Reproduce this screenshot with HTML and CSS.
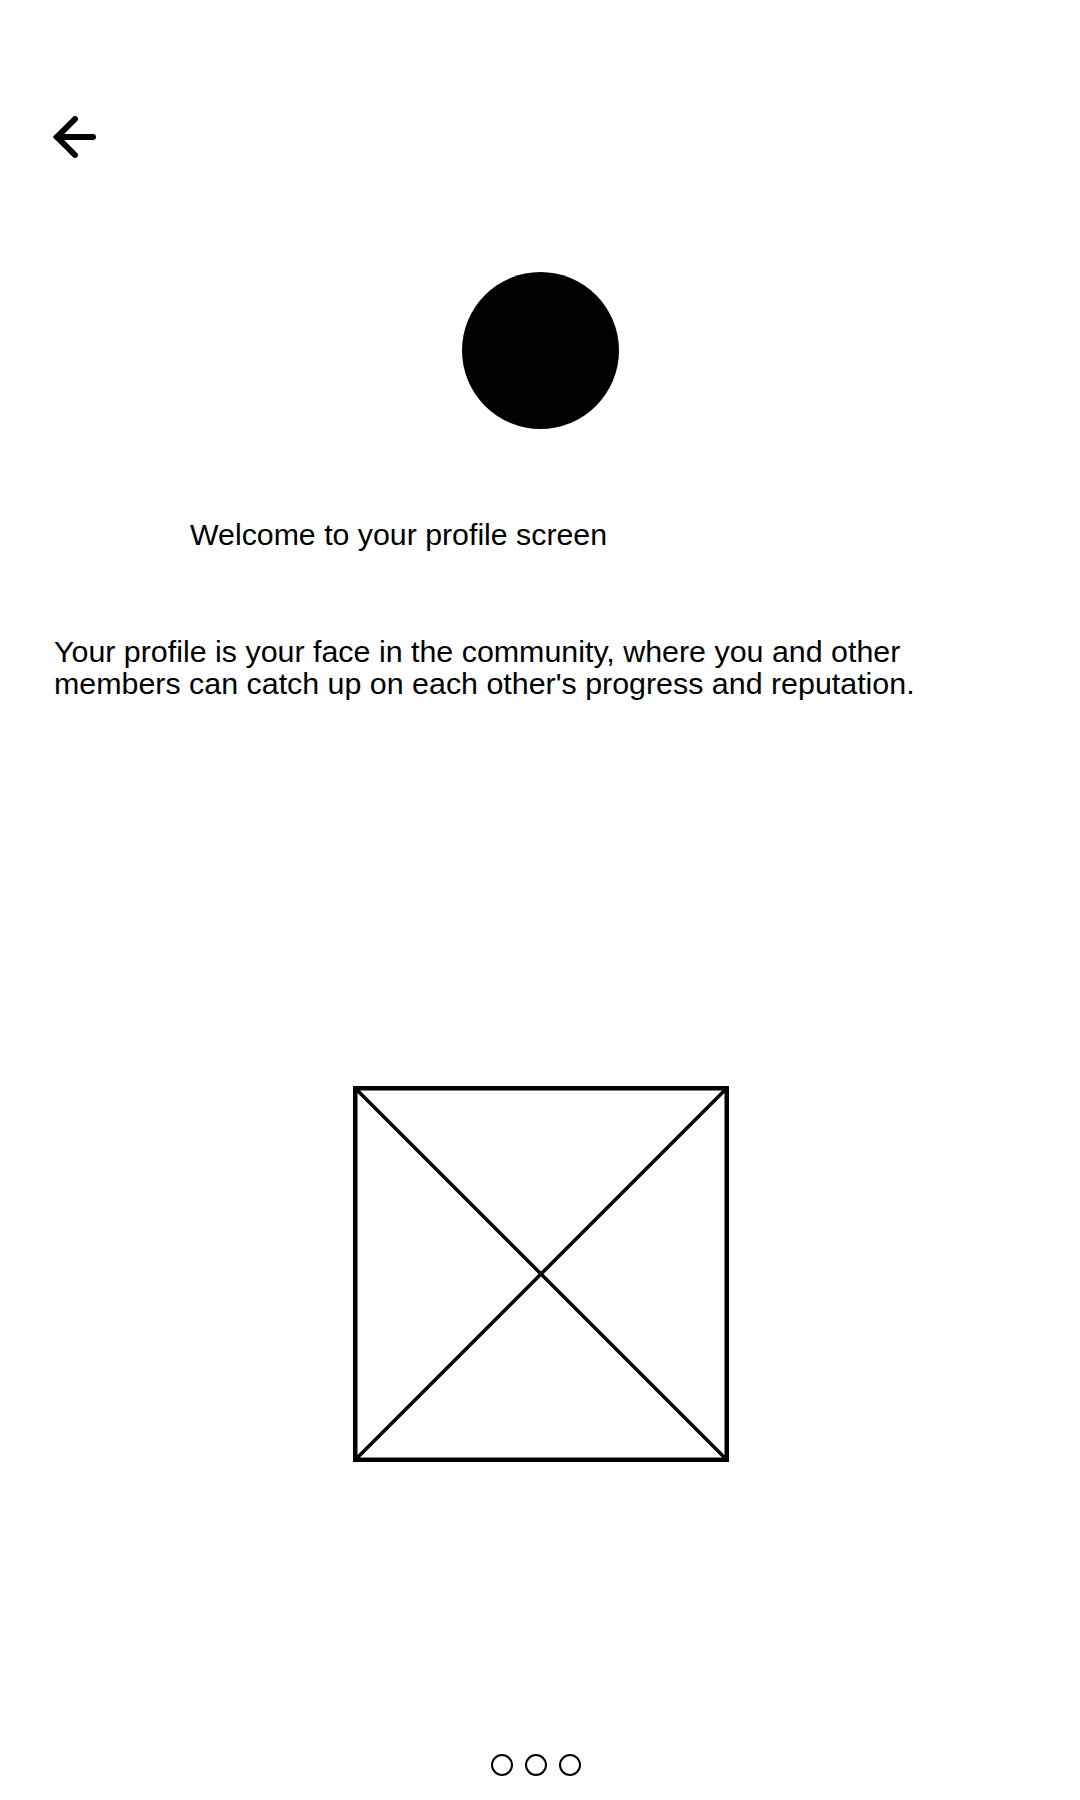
FILE: index.html
```html
<!DOCTYPE html>
<html lang="en">
<head>
<meta charset="utf-8">
<title>Profile</title>
<link rel="stylesheet" href="styles.css">
</head>
<body>
<div class="screen">
  <header class="topbar">
    <button class="back" aria-label="Back">
      <svg width="44" height="44" viewBox="0 0 44 44">
        <path d="M5 21 H41" fill="none" stroke="#000" stroke-width="6" stroke-linecap="round"/>
        <path d="M23 3 L5 21 L23 39" fill="none" stroke="#000" stroke-width="6" stroke-linecap="round" stroke-linejoin="miter"/>
      </svg>
    </button>
  </header>
  <div class="avatar"></div>
  <h1 class="welcome">Welcome to your profile screen</h1>
  <p class="intro">Your profile is your face in the community, where you and other members can catch up on each other's progress and reputation.</p>
  <div class="media">
    <svg class="placeholder" width="376" height="376" viewBox="0 0 376 376">
      <line x1="2" y1="2" x2="374" y2="374" stroke="#000" stroke-width="3.5"/>
      <line x1="374" y1="2" x2="2" y2="374" stroke="#000" stroke-width="3.5"/>
      <rect x="2.25" y="2.25" width="371.5" height="371.5" fill="none" stroke="#000" stroke-width="4.5"/>
    </svg>
  </div>
  <div class="dots">
    <span class="dot"></span>
    <span class="dot"></span>
    <span class="dot"></span>
  </div>
</div>
</body>
</html>
```
FILE: styles.css
```css
html, body {
  margin: 0;
  padding: 0;
  background: #fff;
}
.screen {
  width: 1080px;
  height: 1800px;
  display: flex;
  flex-direction: column;
  font-family: "Liberation Sans", Arial, sans-serif;
  color: #000;
}
.topbar {
  padding: 116px 0 0 52px;
  height: 44px;
}
.back {
  border: 0;
  padding: 0;
  margin: 0;
  background: none;
  width: 44px;
  height: 44px;
  display: block;
}
.back svg {
  display: block;
}
.avatar {
  width: 157px;
  height: 157px;
  border-radius: 50%;
  background: #000;
  margin: 112px auto 0;
  flex: none;
}
.welcome {
  margin: 90px 0 0 190px;
  font-size: 30.3px;
  font-weight: normal;
  line-height: 32px;
}
.intro {
  margin: 84px 0 0 54px;
  width: 960px;
  font-size: 30.4px;
  line-height: 32px;
}
.media {
  margin-top: 387px;
  display: flex;
  justify-content: center;
}
.placeholder {
  display: block;
  margin-left: 1px;
}
.dots {
  margin-top: auto;
  margin-bottom: 24px;
  padding-right: 8px;
  display: flex;
  justify-content: center;
  gap: 12px;
}
.dot {
  width: 18px;
  height: 18px;
  border: 2.5px solid #000;
  border-radius: 50%;
  display: block;
}
```
